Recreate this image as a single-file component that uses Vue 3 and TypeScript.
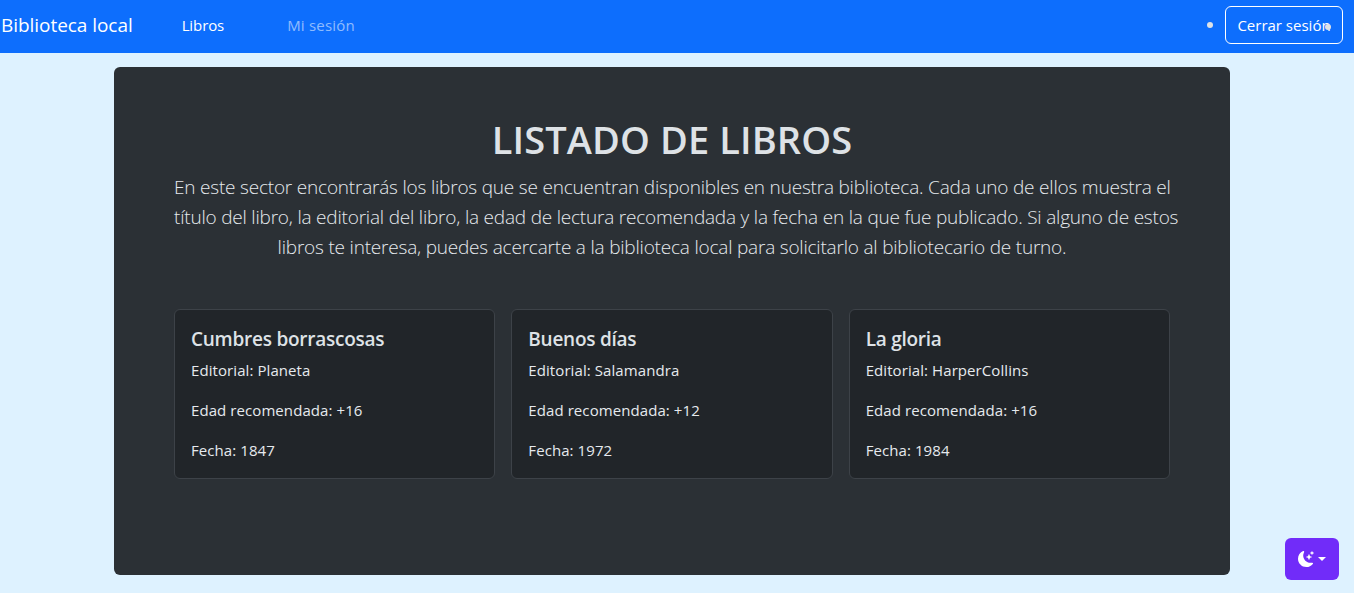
<template>
  <div class="page">
    <nav class="navbar">
      <a class="brand">Biblioteca local</a>
      <ul class="links">
        <li class="link active">Libros</li>
        <li class="link muted">Mi sesión</li>
      </ul>
      <div class="right">
        <span class="dot"></span>
        <button class="logout">
          Cerrar sesión
          <span class="dot over"></span>
        </button>
      </div>
    </nav>

    <main class="panel">
      <h1 class="title">LISTADO DE LIBROS</h1>
      <p class="lead">
        En este sector encontrarás los libros que se encuentran disponibles en nuestra biblioteca. Cada uno de ellos muestra el<br />
        título del libro, la editorial del libro, la edad de lectura recomendada y la fecha en la que fue publicado. Si alguno de estos<br />
        libros te interesa, puedes acercarte a la biblioteca local para solicitarlo al bibliotecario de turno.
      </p>
      <div class="cards">
        <div v-for="b in books" :key="b.title" class="card">
          <h5 class="cardTitle">{{ b.title }}</h5>
          <p class="cardText">Editorial: {{ b.editorial }}</p>
          <p class="cardText">Edad recomendada: {{ b.edad }}</p>
          <p class="cardText last">Fecha: {{ b.fecha }}</p>
        </div>
      </div>
    </main>

    <button class="theme">
      <svg width="16" height="16" viewBox="0 0 16 16" fill="#fff">
        <path d="M6 .278a.768.768 0 0 1 .08.858 7.208 7.208 0 0 0-.878 3.46c0 4.021 3.278 7.277 7.318 7.277.527 0 1.04-.055 1.533-.16a.787.787 0 0 1 .81.316.733.733 0 0 1-.031.893A8.349 8.349 0 0 1 8.344 16C3.734 16 0 12.286 0 7.71 0 4.266 2.114 1.312 5.124.06A.752.752 0 0 1 6 .278z" />
        <path d="M10.794 3.148a.217.217 0 0 1 .412 0l.387 1.162c.173.518.579.924 1.097 1.097l1.162.387a.217.217 0 0 1 0 .412l-1.162.387a1.734 1.734 0 0 0-1.097 1.097l-.387 1.162a.217.217 0 0 1-.412 0l-.387-1.162A1.734 1.734 0 0 0 9.31 6.593l-1.162-.387a.217.217 0 0 1 0-.412l1.162-.387a1.734 1.734 0 0 0 1.097-1.097l.387-1.162zM13.863.099a.145.145 0 0 1 .274 0l.258.774c.115.346.386.617.732.732l.774.258a.145.145 0 0 1 0 .274l-.774.258a1.156 1.156 0 0 0-.732.732l-.258.774a.145.145 0 0 1-.274 0l-.258-.774a1.156 1.156 0 0 0-.732-.732l-.774-.258a.145.145 0 0 1 0-.274l.774-.258c.346-.115.617-.386.732-.732L13.863.1z" />
      </svg>
      <span class="caret"></span>
    </button>
  </div>
</template>

<script setup lang="ts">
const books = [
  { title: 'Cumbres borrascosas', editorial: 'Planeta', edad: '+16', fecha: '1847' },
  { title: 'Buenos días', editorial: 'Salamandra', edad: '+12', fecha: '1972' },
  { title: 'La gloria', editorial: 'HarperCollins', edad: '+16', fecha: '1984' }
]
</script>

<style>
html,
body {
  margin: 0;
  background: #def2ff;
}
</style>

<style scoped>
.page {
  height: 593px;
  position: relative;
  overflow: hidden;
  background: #def2ff;
  font-family: "Open Sans", "Noto Sans", sans-serif;
  color: #dee2e6;
}

.navbar {
  height: 53px;
  box-sizing: border-box;
  background: #0d6efd;
  display: flex;
  align-items: center;
  padding: 0 11px 3px 1px;
}

.brand {
  font-size: 19px;
  color: #fff;
  margin-right: 49px;
  letter-spacing: -0.05px;
}

.links {
  display: flex;
  list-style: none;
  margin: 0;
  padding: 0;
  gap: 63px;
}

.link {
  font-size: 15px;
  letter-spacing: -0.1px;
}

.active {
  color: #fff;
}

.muted {
  color: rgba(255, 255, 255, 0.55);
  letter-spacing: 0.2px;
}

.right {
  margin-left: auto;
  display: flex;
  align-items: center;
  gap: 12px;
}

.dot {
  width: 6px;
  height: 6px;
  border-radius: 50%;
  background: #dee2e6;
}

.logout {
  position: relative;
  width: 118px;
  height: 38px;
  padding: 0;
  background: transparent;
  border: 1px solid #fff;
  border-radius: 6px;
  color: #fff;
  font-family: inherit;
  font-size: 15px;
}

.over {
  position: absolute;
  top: 17px;
  right: 11px;
}

.panel {
  width: 1116px;
  height: 508px;
  box-sizing: border-box;
  margin: 14px 0 0 114px;
  padding: 48px 60px;
  background: #2b3035;
  border-radius: 6px;
}

.title {
  margin: 0 0 9px;
  font-size: 38px;
  line-height: 48px;
  font-weight: 600;
  text-align: center;
  letter-spacing: 0.1px;
}

.lead {
  margin: 0 0 47px;
  font-size: 19px;
  line-height: 30px;
  font-weight: 300;
  text-align: center;
  letter-spacing: -0.2px;
  color: #e6eaee;
  white-space: nowrap;
}

.cards {
  display: grid;
  grid-template-columns: repeat(3, 1fr);
  gap: 16px;
}

.card {
  box-sizing: border-box;
  height: 170px;
  padding: 17px 16px 16px;
  background: #212529;
  border: 1px solid #3d4248;
  border-radius: 6px;
}

.cardTitle {
  margin: 0 0 7px;
  font-size: 19px;
  line-height: 24px;
  font-weight: 600;
  letter-spacing: -0.25px;
}

.cardText {
  margin: 0 0 16px;
  font-size: 15px;
  line-height: 24px;
  letter-spacing: 0.08px;
  color: #e6eaee;
}

.last {
  margin-bottom: 0;
}

.theme {
  position: absolute;
  right: 15px;
  bottom: 13px;
  width: 54px;
  height: 42px;
  border: none;
  border-radius: 6px;
  background: #712cf9;
  display: flex;
  align-items: center;
  justify-content: center;
  gap: 4px;
  padding: 0;
}

.caret {
  width: 0;
  height: 0;
  border-top: 4px solid #fff;
  border-left: 4px solid transparent;
  border-right: 4px solid transparent;
}
</style>
